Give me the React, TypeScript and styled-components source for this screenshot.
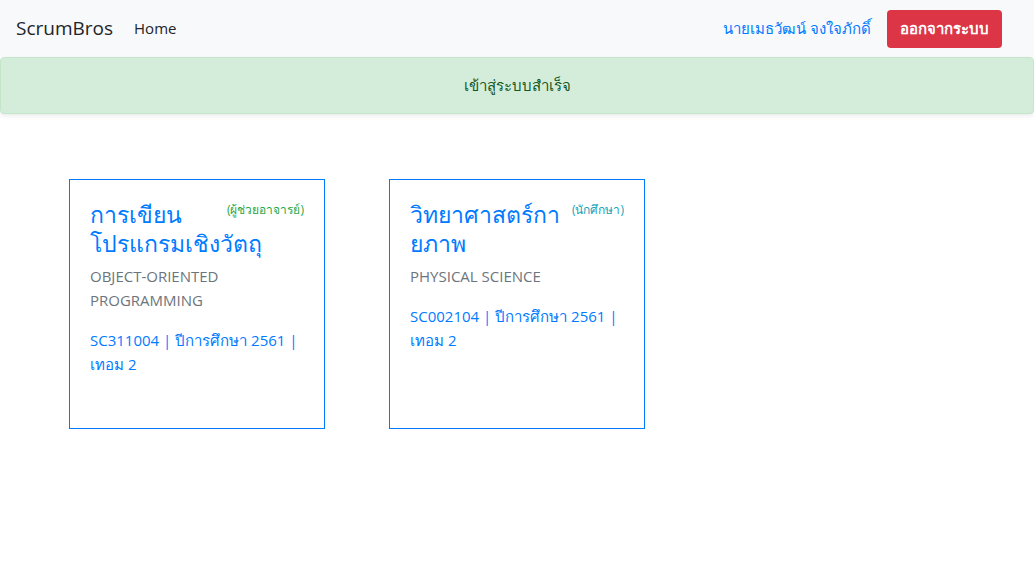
import React from "react";
import styled, { createGlobalStyle } from "styled-components";

const Global = createGlobalStyle`
  * { box-sizing: border-box; }
  body {
    margin: 0;
    font-family: "Open Sans", "Noto Sans", "Segoe UI", Roboto, sans-serif;
    font-size: 16px;
    line-height: 1.5;
    color: #212529;
    background: #fff;
  }
`;

const Nav = styled.nav`
  display: flex;
  align-items: center;
  justify-content: space-between;
  height: 57px;
  padding: 0 32px 0 16px;
  background: #f8f9fa;
`;

const Left = styled.div`
  display: flex;
  align-items: center;
  gap: 21px;
`;

const Brand = styled.a`
  font-size: 19px;
  color: #212529;
  text-decoration: none;
`;

const NavLink = styled.a<{ $color?: string }>`
  font-size: 15px;
  color: ${(p) => p.$color || "#212529"};
  text-decoration: none;
`;

const Right = styled.div`
  display: flex;
  align-items: center;
  gap: 16px;
`;

const LogoutBtn = styled.button`
  height: 38px;
  padding: 0 13px;
  background: #dc3545;
  color: #fff;
  border: none;
  border-radius: 4px;
  font-family: inherit;
  font-size: 15px;
  font-weight: 600;
`;

const Alert = styled.div`
  height: 57px;
  display: flex;
  align-items: center;
  justify-content: center;
  background: #d4edda;
  border: 1px solid #c3e6cb;
  border-radius: 4px;
  color: #155724;
  font-size: 15px;
  box-shadow: 0 2px 4px rgba(0, 0, 0, 0.08);
`;

const Cards = styled.div`
  display: flex;
  gap: 64px;
  padding: 65px 0 0 69px;
`;

const Card = styled.div`
  width: 256px;
  height: 250px;
  border: 1px solid #007bff;
  padding: 20px;
`;

const Title = styled.div`
  font-size: 23px;
  line-height: 28.8px;
  color: #007bff;
  margin-bottom: 6px;
  overflow-wrap: anywhere;
`;

const Role = styled.span<{ $color: string }>`
  float: right;
  margin: 1px 0 0 10px;
  font-size: 12px;
  line-height: 18px;
  white-space: nowrap;
  color: ${(p) => p.$color};
`;

const Sub = styled.div`
  font-size: 15px;
  line-height: 24px;
  color: #6c757d;
  text-transform: uppercase;
  margin-bottom: 16px;
`;

const Meta = styled.div`
  font-size: 15px;
  line-height: 24px;
  color: #007bff;
`;

const courses = [
  {
    th: "การเขียนโปรแกรมเชิงวัตถุ",
    en: "Object-Oriented Programming",
    role: "(ผู้ช่วยอาจารย์)",
    roleColor: "#28a745",
    meta: "SC311004 | ปีการศึกษา 2561 | เทอม 2",
  },
  {
    th: "วิทยาศาสตร์กายภาพ",
    en: "Physical Science",
    role: "(นักศึกษา)",
    roleColor: "#17a2b8",
    meta: "SC002104 | ปีการศึกษา 2561 | เทอม 2",
  },
];

export default function App() {
  return (
    <>
      <Global />
      <Nav>
        <Left>
          <Brand>ScrumBros</Brand>
          <NavLink>Home</NavLink>
        </Left>
        <Right>
          <NavLink $color="#007bff">นายเมธวัฒน์ จงใจภักดิ์</NavLink>
          <LogoutBtn>ออกจากระบบ</LogoutBtn>
        </Right>
      </Nav>
      <Alert>เข้าสู่ระบบสำเร็จ</Alert>
      <Cards>
        {courses.map((c) => (
          <Card key={c.meta}>
            <Title>
              <Role $color={c.roleColor}>{c.role}</Role>
              {c.th}
            </Title>
            <Sub>{c.en}</Sub>
            <Meta>{c.meta}</Meta>
          </Card>
        ))}
      </Cards>
    </>
  );
}
